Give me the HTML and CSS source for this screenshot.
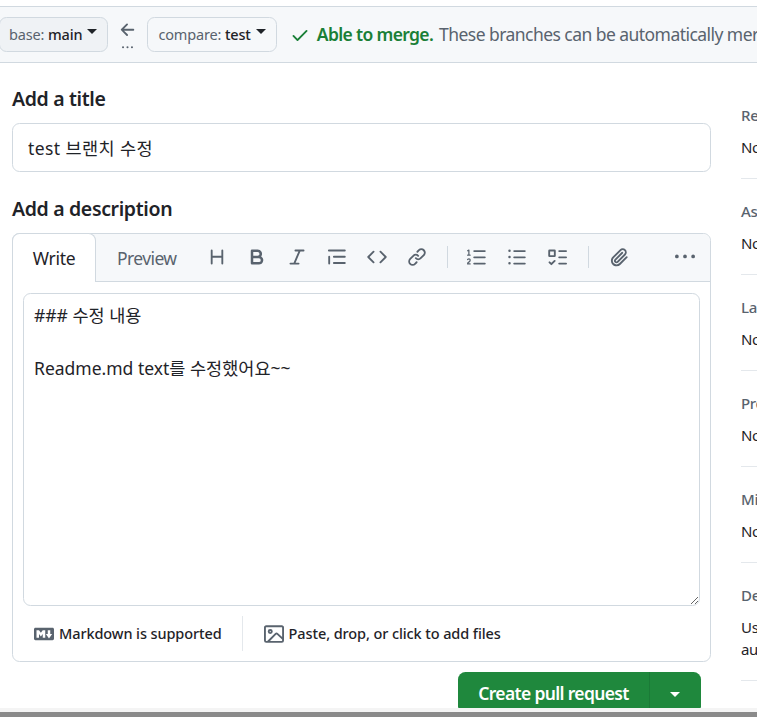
FILE: index.html
```html
<!DOCTYPE html>
<html lang="ko">
<head>
    <meta charset="UTF-8">
    <title>Open a pull request</title>
    <link rel="stylesheet" href="styles.css">
</head>
<body>
    <div class="compare-bar">
        <button class="branch-btn branch-base"><span class="muted">base:</span> main<span class="caret"></span></button>
        <div class="arrow-box">
            <svg class="icon" viewBox="0 0 16 16"><path d="M7.78 12.53a.75.75 0 0 1-1.06 0L2.47 8.28a.75.75 0 0 1 0-1.06l4.25-4.25a.751.751 0 0 1 1.042.018.751.751 0 0 1 .018 1.042L4.81 7h7.44a.75.75 0 0 1 0 1.5H4.81l2.97 2.97a.75.75 0 0 1 0 1.06Z"/></svg>
            <svg class="dots" viewBox="0 0 16 16"><path d="M8 9a1.5 1.5 0 1 0 0-3 1.5 1.5 0 0 0 0 3ZM1.5 9a1.5 1.5 0 1 0 0-3 1.5 1.5 0 0 0 0 3Zm13 0a1.5 1.5 0 1 0 0-3 1.5 1.5 0 0 0 0 3Z"/></svg>
        </div>
        <button class="branch-btn"><span class="muted">compare:</span> test<span class="caret"></span></button>
        <svg class="icon check" viewBox="0 0 16 16"><path d="M13.78 4.22a.75.75 0 0 1 0 1.06l-7.25 7.25a.75.75 0 0 1-1.06 0L2.22 9.28a.751.751 0 0 1 .018-1.042.751.751 0 0 1 1.042-.018L6 10.94l6.72-6.72a.75.75 0 0 1 1.06 0Z"/></svg>
        <span class="merge-ok">Able to merge.</span>
        <span class="merge-note">These branches can be automatically merged.</span>
    </div>

    <div class="layout">
        <div class="main">
            <h2 class="field-label">Add a title</h2>
            <input class="title-input" type="text" value="test 브랜치 수정">

            <h2 class="field-label desc-label">Add a description</h2>
            <div class="editor">
                <div class="editor-head">
                    <div class="tab tab-active">Write</div>
                    <div class="tab">Preview</div>
                    <div class="toolbar">
                        <svg class="icon" viewBox="0 0 16 16"><path d="M3.75 2a.75.75 0 0 1 .75.75V7h7V2.75a.75.75 0 0 1 1.5 0v10.5a.75.75 0 0 1-1.5 0V8.5h-7v4.75a.75.75 0 0 1-1.5 0V2.75A.75.75 0 0 1 3.75 2Z"/></svg>
                        <svg class="icon" viewBox="0 0 16 16"><path d="M4 2h4.5a3.501 3.501 0 0 1 2.852 5.53A3.499 3.499 0 0 1 9.5 14H4a1 1 0 0 1-1-1V3a1 1 0 0 1 1-1Zm1 7v3h4.5a1.5 1.5 0 0 0 0-3Zm3.5-2a1.5 1.5 0 0 0 0-3H5v3Z"/></svg>
                        <svg class="icon" viewBox="0 0 16 16"><path d="M6 2.75A.75.75 0 0 1 6.75 2h6.5a.75.75 0 0 1 0 1.5h-2.505l-3.858 9H9.25a.75.75 0 0 1 0 1.5h-6.5a.75.75 0 0 1 0-1.5h2.505l3.858-9H6.75A.75.75 0 0 1 6 2.75Z"/></svg>
                        <svg class="icon" viewBox="0 0 16 16"><path d="M.75 2.75A.75.75 0 0 1 1.5 2h12.75a.75.75 0 0 1 0 1.5H1.5a.75.75 0 0 1-.75-.75Zm4 5A.75.75 0 0 1 5.5 7h8.75a.75.75 0 0 1 0 1.5H5.5a.75.75 0 0 1-.75-.75Zm0 5a.75.75 0 0 1 .75-.75h8.75a.75.75 0 0 1 0 1.5H5.5a.75.75 0 0 1-.75-.75ZM2.5 7.75a.75.75 0 0 0-1.5 0v5.5a.75.75 0 0 0 1.5 0Z"/></svg>
                        <svg class="icon" viewBox="0 0 16 16"><path d="m11.28 3.22 4.25 4.25a.75.75 0 0 1 0 1.06l-4.25 4.25a.749.749 0 0 1-1.275-.326.749.749 0 0 1 .215-.734L13.94 8l-3.72-3.72a.749.749 0 0 1 .326-1.275.749.749 0 0 1 .734.215Zm-6.56 0a.751.751 0 0 1 1.042.018.751.751 0 0 1 .018 1.042L2.06 8l3.72 3.72a.749.749 0 0 1-.326 1.275.749.749 0 0 1-.734-.215L.47 8.53a.75.75 0 0 1 0-1.06Z"/></svg>
                        <svg class="icon" viewBox="0 0 16 16"><path d="m7.775 3.275 1.25-1.25a3.5 3.5 0 1 1 4.95 4.95l-2.5 2.5a3.5 3.5 0 0 1-4.95 0 .751.751 0 0 1 .018-1.042.751.751 0 0 1 1.042-.018 1.998 1.998 0 0 0 2.83 0l2.5-2.5a2.002 2.002 0 0 0-2.83-2.83l-1.25 1.25a.751.751 0 0 1-1.042-.018.751.751 0 0 1-.018-1.042Zm-4.69 9.64a1.998 1.998 0 0 0 2.83 0l1.25-1.25a.751.751 0 0 1 1.042.018.751.751 0 0 1 .018 1.042l-1.25 1.25a3.5 3.5 0 1 1-4.95-4.95l2.5-2.5a3.5 3.5 0 0 1 4.95 0 .751.751 0 0 1-.018 1.042.751.751 0 0 1-1.042.018 1.998 1.998 0 0 0-2.83 0l-2.5 2.5a1.998 1.998 0 0 0 0 2.83Z"/></svg>
                        <span class="tool-sep"></span>
                        <svg class="icon" viewBox="0 0 16 16"><path d="M5 3.25a.75.75 0 0 1 .75-.75h8.5a.75.75 0 0 1 0 1.5h-8.5A.75.75 0 0 1 5 3.25Zm0 5a.75.75 0 0 1 .75-.75h8.5a.75.75 0 0 1 0 1.5h-8.5A.75.75 0 0 1 5 8.25Zm0 5a.75.75 0 0 1 .75-.75h8.5a.75.75 0 0 1 0 1.5h-8.5a.75.75 0 0 1-.75-.75ZM.924 10.32a.5.5 0 0 1-.851-.525l.001-.001.001-.002.002-.004.007-.011c.097-.144.215-.273.348-.384.228-.19.588-.392 1.068-.392.468 0 .858.181 1.126.484.259.294.377.673.377 1.038 0 .987-.686 1.495-1.156 1.845l-.047.035c-.303.225-.522.4-.654.597h1.357a.5.5 0 0 1 0 1H.5a.5.5 0 0 1-.5-.5c0-1.005.692-1.52 1.167-1.875l.035-.025c.531-.396.8-.625.8-1.078a.57.57 0 0 0-.128-.376C1.806 10.068 1.695 10 1.5 10a.658.658 0 0 0-.429.163.835.835 0 0 0-.144.153ZM2.003 2.5V6h.503a.5.5 0 0 1 0 1H.5a.5.5 0 0 1 0-1h.503V3.308l-.28.14a.5.5 0 0 1-.446-.895l1.003-.5a.5.5 0 0 1 .723.447Z"/></svg>
                        <svg class="icon" viewBox="0 0 16 16"><path d="M5.75 2.5h8.5a.75.75 0 0 1 0 1.5h-8.5a.75.75 0 0 1 0-1.5Zm0 5h8.5a.75.75 0 0 1 0 1.5h-8.5a.75.75 0 0 1 0-1.5Zm0 5h8.5a.75.75 0 0 1 0 1.5h-8.5a.75.75 0 0 1 0-1.5ZM2 14a1 1 0 1 1 0-2 1 1 0 0 1 0 2Zm1-6a1 1 0 1 1-2 0 1 1 0 0 1 2 0ZM2 4a1 1 0 1 1 0-2 1 1 0 0 1 0 2Z"/></svg>
                        <svg class="icon" viewBox="0 0 16 16"><path d="M2 2h4a1 1 0 0 1 1 1v4a1 1 0 0 1-1 1H2a1 1 0 0 1-1-1V3a1 1 0 0 1 1-1Zm4.655 8.595a.75.75 0 0 1 0 1.06L4.03 14.28a.75.75 0 0 1-1.06 0l-1.5-1.5a.749.749 0 0 1 .326-1.275.749.749 0 0 1 .734.215l.97.97 2.095-2.095a.75.75 0 0 1 1.06 0ZM9.75 2.5h5.5a.75.75 0 0 1 0 1.5h-5.5a.75.75 0 0 1 0-1.5Zm0 5h5.5a.75.75 0 0 1 0 1.5h-5.5a.75.75 0 0 1 0-1.5Zm0 5h5.5a.75.75 0 0 1 0 1.5h-5.5a.75.75 0 0 1 0-1.5Zm-7.25-9v3h3v-3Z"/></svg>
                        <span class="tool-sep tool-sep-wide"></span>
                        <svg class="icon" viewBox="0 0 16 16"><path d="M12.212 3.02a1.753 1.753 0 0 0-2.478.003l-5.83 5.83a3.007 3.007 0 0 0-.88 2.127c0 .795.315 1.551.88 2.116.567.567 1.333.89 2.126.89.79 0 1.548-.321 2.116-.89l5.48-5.48a.75.75 0 0 1 1.061 1.06l-5.48 5.48a4.492 4.492 0 0 1-3.177 1.33c-1.2 0-2.345-.487-3.187-1.33a4.483 4.483 0 0 1-1.32-3.177c0-1.195.475-2.341 1.32-3.186l5.83-5.83a3.25 3.25 0 0 1 5.553 2.297c0 .863-.343 1.691-.953 2.301L7.439 12.39c-.375.377-.884.59-1.416.593a1.998 1.998 0 0 1-1.412-.593 1.992 1.992 0 0 1 0-2.828l5.48-5.48a.751.751 0 0 1 1.042.018.751.751 0 0 1 .018 1.042l-5.48 5.48a.492.492 0 0 0 0 .707.499.499 0 0 0 .703 0l5.833-5.833a1.755 1.755 0 0 0 0-2.474Z"/></svg>
                        <svg class="icon kebab" viewBox="0 0 16 16"><path d="M8 9a1.5 1.5 0 1 0 0-3 1.5 1.5 0 0 0 0 3ZM1.5 9a1.5 1.5 0 1 0 0-3 1.5 1.5 0 0 0 0 3Zm13 0a1.5 1.5 0 1 0 0-3 1.5 1.5 0 0 0 0 3Z"/></svg>
                    </div>
                </div>
                <div class="editor-body">
                    <textarea class="desc-input">### 수정 내용

Readme.md text를 수정했어요~~</textarea>
                </div>
                <div class="editor-foot">
                    <span class="foot-item foot-md">
                        <svg class="icon" viewBox="0 0 16 16"><path d="M14.85 3c.63 0 1.15.52 1.14 1.15v7.7c0 .63-.51 1.15-1.15 1.15H1.15C.52 13 0 12.48 0 11.84V4.15C0 3.52.52 3 1.15 3ZM9 11V5H7L5.5 7 4 5H2v6h2V8l1.5 1.92L7 8v3Zm2.99.5L14.5 8H13V5h-2v3H9.5Z"/></svg>
                        <span class="foot-text">Markdown is supported</span>
                    </span>
                    <span class="foot-item foot-files">
                        <svg class="icon" viewBox="0 0 16 16"><path d="M16 13.25A1.75 1.75 0 0 1 14.25 15H1.75A1.75 1.75 0 0 1 0 13.25V2.75C0 1.784.784 1 1.75 1h12.5c.966 0 1.75.784 1.75 1.75ZM1.75 2.5a.25.25 0 0 0-.25.25v10.5c0 .138.112.25.25.25h.94l.03-.03 6.077-6.078a1.75 1.75 0 0 1 2.412-.06L14.5 10.31V2.75a.25.25 0 0 0-.25-.25Zm12.5 11a.25.25 0 0 0 .25-.25v-.917l-4.298-3.889a.25.25 0 0 0-.344.009L4.81 13.5ZM7 6a2 2 0 1 1-3.999.001A2 2 0 0 1 7 6ZM5.5 6a.5.5 0 1 0-1 0 .5.5 0 0 0 1 0Z"/></svg>
                        <span class="foot-text">Paste, drop, or click to add files</span>
                    </span>
                </div>
            </div>
            <div class="actions">
                <div class="create-btn">
                    <span class="create-label">Create pull request</span>
                    <span class="create-more"><span class="caret"></span></span>
                </div>
            </div>
        </div>

        <div class="sidebar">
            <div class="side-section">
                <div class="side-title">Reviewers</div>
                <div class="side-text">No reviews</div>
            </div>
            <div class="side-section">
                <div class="side-title">Assignees</div>
                <div class="side-text">No one—assign yourself</div>
            </div>
            <div class="side-section">
                <div class="side-title">Labels</div>
                <div class="side-text">None yet</div>
            </div>
            <div class="side-section">
                <div class="side-title">Projects</div>
                <div class="side-text">None yet</div>
            </div>
            <div class="side-section">
                <div class="side-title">Milestone</div>
                <div class="side-text">No milestone</div>
            </div>
            <div class="side-section">
                <div class="side-title">Development</div>
                <div class="side-text">Use Closing keywords in the description to<br>automatically close issues</div>
            </div>
            <div class="side-section">
                <div class="side-title">Helpful resources</div>
            </div>
        </div>
    </div>

    <div class="scrollbar"><div class="scrollbar-thumb"></div></div>
</body>
</html>
```

FILE: styles.css
```css
html, body {
    height: 100%;
    overflow: hidden;
}
body {
    margin: 0;
    padding-top: 6px;
    box-sizing: border-box;
    background-color: #fff;
    color: #1f2328;
    font-family: "Noto Sans", "Noto Sans CJK KR", sans-serif;
    font-size: 17.5px;
    letter-spacing: -0.3px;
}
.icon {
    width: 20px;
    height: 20px;
    flex: none;
    fill: #59636e;
}
.muted {
    color: #59636e;
    font-weight: 400;
}
.caret {
    display: inline-block;
    border-top: 5px solid #1f2328;
    border-left: 5px solid transparent;
    border-right: 5px solid transparent;
    margin-left: 5px;
    vertical-align: 6px;
}

/* branch compare bar */
.compare-bar {
    display: flex;
    align-items: center;
    width: 757px;
    height: 57px;
    box-sizing: border-box;
    background-color: #f6f8fa;
    border-top: 1px solid #d1d9e0;
    border-bottom: 1px solid #d1d9e0;
    white-space: nowrap;
    overflow: hidden;
}
.branch-btn {
    height: 35px;
    padding: 0 10px 2px 10px;
    background-color: #f6f8fa;
    border: 1px solid #d1d9e0;
    border-radius: 7.5px;
    color: #1f2328;
    font-family: inherit;
    font-size: 14.5px;
    font-weight: 500;
    letter-spacing: -0.15px;
    flex: none;
}
.branch-base {
    margin-left: -1px;
    padding-left: 9px;
    background-color: #eff2f5;
}
.arrow-box {
    display: flex;
    flex-direction: column;
    align-items: center;
    width: 39px;
    margin-top: 4px;
    flex: none;
}
.dots {
    width: 11px;
    height: 11px;
    fill: #59636e;
    margin-top: 2px;
}
.check {
    fill: #1a7f37;
    margin-left: 13px;
    margin-right: 7px;
}
.merge-ok {
    color: #1a7f37;
    font-weight: 600;
    letter-spacing: -0.65px;
    margin-right: 6px;
    margin-bottom: 2px;
}
.merge-note {
    color: #59636e;
    letter-spacing: -0.55px;
    margin-bottom: 2px;
}

/* page columns */
.layout {
    display: flex;
    gap: 30px;
    width: 1100px;
    padding-left: 12px;
}
.main {
    width: 699px;
    flex: none;
    padding-top: 23px;
}
.field-label {
    margin: 0 0 12px;
    font-size: 19.5px;
    font-weight: 600;
    letter-spacing: -0.35px;
    line-height: 25px;
}
.desc-label {
    margin-top: 24px;
}
.title-input {
    display: block;
    width: 100%;
    height: 49px;
    box-sizing: border-box;
    padding: 0 15px;
    border: 1px solid #d1d9e0;
    border-radius: 7.5px;
    color: #1f2328;
    font-family: inherit;
    font-size: 17.5px;
    letter-spacing: 0.4px;
}

/* description editor */
.editor {
    border: 1px solid #d1d9e0;
    border-radius: 7.5px;
}
.editor-head {
    display: flex;
    align-items: center;
    height: 47px;
    background-color: #f6f8fa;
    border-bottom: 1px solid #d1d9e0;
    border-radius: 7.5px 7.5px 0 0;
}
.tab {
    padding: 0 20px 0 21px;
    color: #59636e;
    letter-spacing: -0.6px;
}
.tab-active {
    align-self: stretch;
    display: flex;
    align-items: center;
    width: 84px;
    box-sizing: border-box;
    justify-content: center;
    padding: 0;
    margin: -1px 0 -1px -1px;
    background-color: #fff;
    border: 1px solid #d1d9e0;
    border-bottom: none;
    border-radius: 7.5px 7.5px 0 0;
    color: #1f2328;
    letter-spacing: -0.3px;
}
.toolbar {
    display: flex;
    align-items: center;
    gap: 20px;
    flex: 1;
    margin-left: 11px;
    margin-bottom: 2px;
    padding-right: 15px;
}
.tool-sep {
    width: 1px;
    height: 22px;
    background-color: #d1d9e0;
    flex: none;
    margin: 0 -0.5px;
}
.tool-sep-wide {
    margin: 0 0.5px;
}
.kebab {
    margin-left: auto;
}
.editor-body {
    padding: 11px 10px 0;
}
.desc-input {
    display: block;
    width: 100%;
    height: 313px;
    box-sizing: border-box;
    padding: 8px 10px;
    border: 1px solid #d1d9e0;
    border-radius: 7.5px;
    color: #1f2328;
    font-family: inherit;
    font-size: 17.5px;
    line-height: 26.25px;
    letter-spacing: 0;
    resize: vertical;
    outline: none;
}
.editor-foot {
    display: flex;
    align-items: center;
    height: 55px;
    padding-left: 21px;
    font-size: 14.5px;
    font-weight: 500;
    letter-spacing: -0.1px;
}
.foot-item {
    display: flex;
    align-items: center;
    gap: 5px;
}
.foot-text {
    margin-bottom: 2px;
}
.foot-md {
    padding-right: 20px;
    height: 35px;
    border-right: 1px solid #e4e8ec;
    margin-right: 21px;
}

/* submit button */
.actions {
    display: flex;
    justify-content: flex-end;
    margin-top: 10px;
    padding-right: 10px;
}
.create-btn {
    display: flex;
    width: 243px;
    height: 42px;
    background-color: #1f883d;
    border-radius: 7.5px;
    color: #fff;
    font-weight: 600;
}
.create-label {
    width: 192px;
    box-sizing: border-box;
    text-align: center;
    line-height: 42px;
    letter-spacing: -0.65px;
    border-right: 1px solid #1b7a37;
}
.create-more {
    flex: 1;
    text-align: center;
    line-height: 42px;
    padding-right: 1px;
}
.create-more .caret {
    border-top-color: #fff;
    margin-left: 0;
    vertical-align: 3px;
}

/* right sidebar, runs off the window */
.sidebar {
    width: 300px;
    flex: none;
    padding-top: 20px;
    font-size: 15px;
}
.side-section {
    padding: 22px 0 20px;
    border-bottom: 1px solid #e4e8ec;
}
.side-title {
    color: #59636e;
    font-weight: 500;
    line-height: 20px;
    margin-bottom: 11px;
}
.side-text {
    line-height: 22px;
}

/* browser scrollbar along the bottom edge */
.scrollbar {
    position: fixed;
    left: 0;
    right: 0;
    bottom: 0;
    height: 9px;
    background-color: #f4f4f4;
}
.scrollbar-thumb {
    height: 5px;
    margin-top: 4px;
    background-color: #8a8a8a;
}
```
